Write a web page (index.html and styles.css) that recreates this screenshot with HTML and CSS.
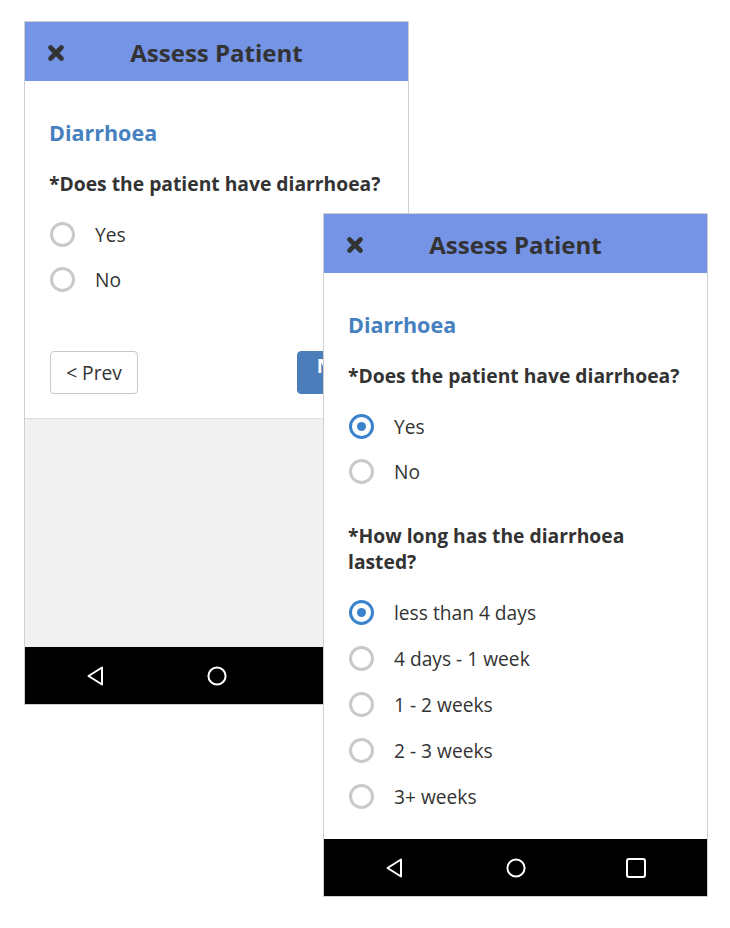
FILE: index.html
```html
<!DOCTYPE html>
<html lang="en">
<head>
<meta charset="utf-8">
<title>Assess Patient</title>
<link rel="stylesheet" href="styles.css">
</head>
<body>
<div class="canvas">
  <div class="phone phone-back">
    <header class="appbar">
      <svg class="close" viewBox="0 0 18 18" width="18" height="18"><path d="M3.5 3.5 L14.5 14.5 M14.5 3.5 L3.5 14.5" stroke="#333" stroke-width="4.6" stroke-linecap="round"/></svg>
      <h1 class="title">Assess Patient</h1>
      <span></span>
    </header>
    <main class="content">
      <h2 class="section">Diarrhoea</h2>
      <p class="question">*Does the patient have diarrhoea?</p>
      <ul class="options">
        <li class="option"><span class="radio"></span>Yes</li>
        <li class="option"><span class="radio"></span>No</li>
      </ul>
      <div class="buttons">
        <button class="btn btn-prev">&lt; Prev</button>
        <button class="btn btn-next">Next &gt;</button>
      </div>
    </main>
    <div class="filler"></div>
    <nav class="navbar">
      <span class="navitem"><svg viewBox="0 0 22 22" width="22" height="22"><path d="M17 2.5 L17 19.5 L3.5 11 Z" fill="none" stroke="#fff" stroke-width="2" stroke-linejoin="round"/></svg></span>
      <span class="navitem"><svg viewBox="0 0 22 22" width="22" height="22"><circle cx="11" cy="11" r="8.6" fill="none" stroke="#fff" stroke-width="2"/></svg></span>
      <span class="navitem"></span>
    </nav>
  </div>

  <div class="phone phone-front">
    <header class="appbar">
      <svg class="close" viewBox="0 0 18 18" width="18" height="18"><path d="M3.5 3.5 L14.5 14.5 M14.5 3.5 L3.5 14.5" stroke="#333" stroke-width="4.6" stroke-linecap="round"/></svg>
      <h1 class="title">Assess Patient</h1>
      <span></span>
    </header>
    <main class="content content-scroll">
      <h2 class="section">Diarrhoea</h2>
      <p class="question">*Does the patient have diarrhoea?</p>
      <ul class="options">
        <li class="option"><span class="radio checked"></span>Yes</li>
        <li class="option"><span class="radio"></span>No</li>
      </ul>
      <p class="question question-next">*How long has the diarrhoea lasted?</p>
      <ul class="options options-long">
        <li class="option"><span class="radio checked"></span>less than 4 days</li>
        <li class="option"><span class="radio"></span>4 days - 1 week</li>
        <li class="option"><span class="radio"></span>1 - 2 weeks</li>
        <li class="option"><span class="radio"></span>2 - 3 weeks</li>
        <li class="option"><span class="radio"></span>3+ weeks</li>
      </ul>
    </main>
    <nav class="navbar">
      <span class="navitem"><svg viewBox="0 0 22 22" width="22" height="22"><path d="M17 2.5 L17 19.5 L3.5 11 Z" fill="none" stroke="#fff" stroke-width="2" stroke-linejoin="round"/></svg></span>
      <span class="navitem"><svg viewBox="0 0 22 22" width="22" height="22"><circle cx="11" cy="11" r="8.6" fill="none" stroke="#fff" stroke-width="2"/></svg></span>
      <span class="navitem"><svg viewBox="0 0 22 22" width="22" height="22"><rect x="2" y="2" width="18" height="18" rx="2" fill="none" stroke="#fff" stroke-width="2"/></svg></span>
    </nav>
  </div>
</div>
</body>
</html>
```

FILE: styles.css
```css
* { box-sizing: border-box; }

html, body {
  margin: 0;
  padding: 0;
  background: #fff;
}

body {
  font-family: "Open Sans", "Liberation Sans", sans-serif;
  color: #333;
}

.canvas {
  position: relative;
  width: 730px;
  height: 928px;
}

.phone {
  position: absolute;
  width: 385px;
  height: 684px;
  border: 1px solid #cfcfcf;
  background: #fff;
  display: flex;
  flex-direction: column;
  overflow: hidden;
}

.phone-back { left: 24px; top: 21px; }
.phone-front { left: 323px; top: 213px; }

.appbar {
  height: 59px;
  flex: none;
  background: #7594e6;
  display: grid;
  grid-template-columns: 1fr auto 1fr;
  align-items: center;
  padding: 2px 22px 0;
}

.close { display: block; }

.title {
  margin: 0;
  font-size: 24px;
  font-weight: 700;
  color: #333;
  line-height: 30px;
}

.content {
  padding: 38px 24px 24px;
  border-bottom: 1px solid #dcdcdc;
  flex: none;
}

.content-scroll {
  flex: 1 1 0;
  min-height: 0;
  overflow: hidden;
  padding-bottom: 0;
  border-bottom: none;
}

.section {
  margin: 0 0 24px;
  font-size: 21.5px;
  line-height: 28px;
  font-weight: 700;
  color: #4680bf;
}

.question {
  margin: 0 0 15px;
  font-size: 19.3px;
  line-height: 26px;
  font-weight: 700;
  color: #333;
}

.question-next { margin-top: 29px; margin-bottom: 14px; }

.options {
  list-style: none;
  margin: 0;
  padding: 0;
}

.option {
  height: 45px;
  display: flex;
  align-items: center;
  font-size: 19.2px;
  color: #333;
}

.options-long .option { height: 46px; }

.radio {
  width: 25px;
  height: 25px;
  margin-left: 1px;
  margin-right: 20px;
  border-radius: 50%;
  border: 3px solid #c9c9c9;
  background: #fff;
  display: flex;
  align-items: center;
  justify-content: center;
  flex: none;
}

.radio.checked {
  border: 3px solid #3b82cc;
}

.radio.checked::after {
  content: "";
  width: 9px;
  height: 9px;
  border-radius: 50%;
  background: #3b82cc;
}

.buttons {
  margin-top: 49px;
  display: flex;
  justify-content: space-between;
  padding: 0 1px;
}

.btn {
  height: 43px;
  border-radius: 4px;
  font-family: "Open Sans", "Liberation Sans", sans-serif;
  font-size: 19.2px;
  padding: 0 15px;
}

.btn-prev {
  width: 88px;
  background: #fff;
  border: 1px solid #c8c8c8;
  color: #333;
}

.btn-next {
  width: 86px;
  background: #4a7dba;
  border: 1px solid #4a7dba;
  color: #fff;
  font-weight: 700;
}

.filler {
  flex: 1;
  background: #f1f1f1;
}

.navbar {
  height: 57px;
  flex: none;
  background: #000;
  display: flex;
  justify-content: space-between;
  align-items: center;
  padding: 0 49px;
}

.navitem {
  width: 44px;
  height: 44px;
  display: flex;
  align-items: center;
  justify-content: center;
}

.navitem svg { display: block; }
```
